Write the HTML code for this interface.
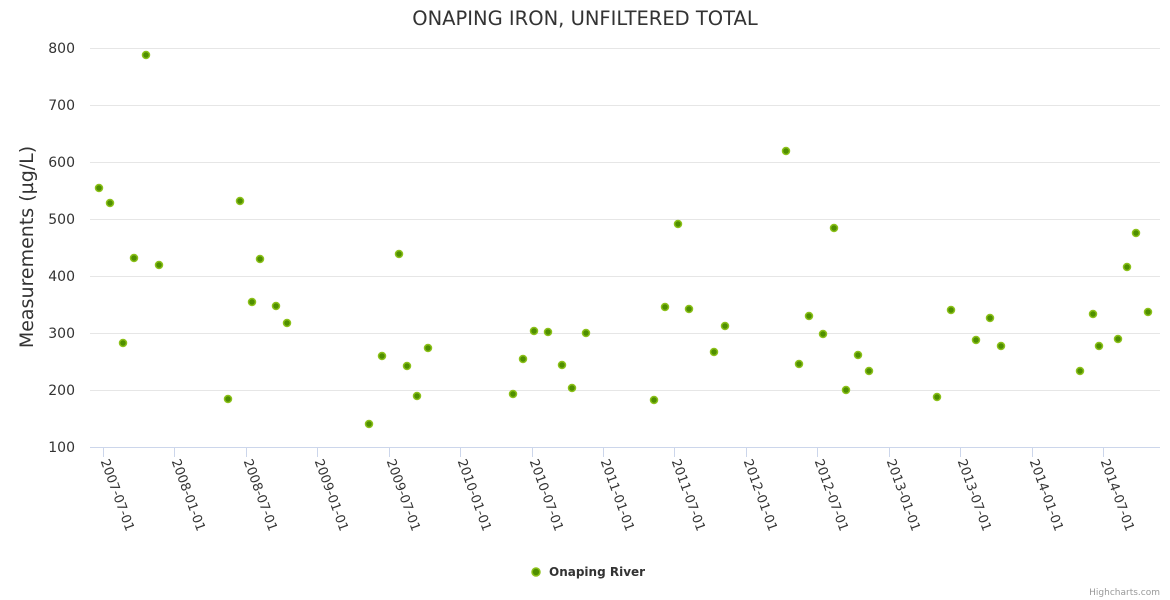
<!DOCTYPE html>
<html><head><meta charset="utf-8"><style>
html,body{margin:0;padding:0;background:#fff;width:1170px;height:600px;overflow:hidden}
svg text{font-family:"DejaVu Sans","Liberation Sans",sans-serif}
</style></head><body>
<svg width="1170" height="600" xmlns="http://www.w3.org/2000/svg">
<text x="585" y="25" text-anchor="middle" font-size="19.5" fill="#333">ONAPING IRON, UNFILTERED TOTAL</text>
<g stroke="#e6e6e6" stroke-width="1">
<line x1="90" x2="1160" y1="48.5" y2="48.5"/>
<line x1="90" x2="1160" y1="105.5" y2="105.5"/>
<line x1="90" x2="1160" y1="162.5" y2="162.5"/>
<line x1="90" x2="1160" y1="219.5" y2="219.5"/>
<line x1="90" x2="1160" y1="276.5" y2="276.5"/>
<line x1="90" x2="1160" y1="333.5" y2="333.5"/>
<line x1="90" x2="1160" y1="390.5" y2="390.5"/>
</g>
<line x1="90" x2="1160" y1="447.5" y2="447.5" stroke="#ccd6eb"/>
<g font-size="14" fill="#333" text-anchor="end">
<text x="75" y="53">800</text><text x="75" y="110">700</text><text x="75" y="167">600</text>
<text x="75" y="224">500</text><text x="75" y="281">400</text><text x="75" y="338">300</text>
<text x="75" y="395">200</text><text x="75" y="452">100</text>
</g>
<text transform="translate(33,247) rotate(-90)" text-anchor="middle" font-size="19" fill="#333">Measurements (µg/L)</text>
<g id="ticks" stroke="#ccd6eb"></g>
<g id="xl" font-size="13" fill="#333"></g>
<g id="pts"></g>
<circle cx="536" cy="572" r="4" fill="#4f8f00" stroke="#8cc11a" stroke-width="1.5"/>
<text x="549" y="576" font-size="12" font-weight="bold" fill="#333">Onaping River</text>
<text x="1160" y="595" text-anchor="end" font-size="9" fill="#999">Highcharts.com</text>
</svg>
<script>
var ns="http://www.w3.org/2000/svg";
var labels=["2007-07-01","2008-01-01","2008-07-01","2009-01-01","2009-07-01","2010-01-01","2010-07-01","2011-01-01","2011-07-01","2012-01-01","2012-07-01","2013-01-01","2013-07-01","2014-01-01","2014-07-01"];
var tk=document.getElementById("ticks"),xl=document.getElementById("xl");
labels.forEach(function(l,i){var x=Math.round(103+i*71.43)+0.5;
var ln=document.createElementNS(ns,"line");ln.setAttribute("x1",x);ln.setAttribute("x2",x);ln.setAttribute("y1",447);ln.setAttribute("y2",457);tk.appendChild(ln);
var t=document.createElementNS(ns,"text");t.setAttribute("transform","translate("+(x-3)+",461) rotate(70)");t.textContent=l;xl.appendChild(t);});
var P=[[99,188],[110,203],[123,343],[134,258],[146,55],[159,265],[228,399],[240,201],[252,302],[260,259],[276,306],[287,323],[369,424],[382,356],[399,254],[407,366],[417,396],[428,348],[513,394],[523,359],[534,331],[548,332],[562,365],[572,388],[586,333],[654,400],[665,307],[678,224],[689,309],[714,352],[725,326],[786,151],[799,364],[809,316],[823,334],[834,228],[846,390],[858,355],[869,371],[937,397],[951,310],[976,340],[990,318],[1001,346],[1080,371],[1093,314],[1099,346],[1118,339],[1127,267],[1136,233],[1148,312]];
var g=document.getElementById("pts");
P.forEach(function(p){var c=document.createElementNS(ns,"circle");c.setAttribute("cx",p[0]);c.setAttribute("cy",p[1]);c.setAttribute("r",3.5);c.setAttribute("fill","#4f8f00");c.setAttribute("stroke","#8cc11a");c.setAttribute("stroke-width","1.5");g.appendChild(c);});
</script>
</body></html>
